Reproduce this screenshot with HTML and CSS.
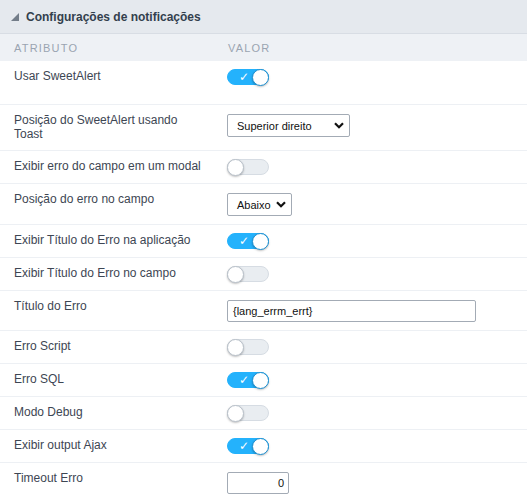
FILE: index.html
```html
<!DOCTYPE html>
<html lang="pt">
<head>
<meta charset="utf-8">
<title>Configurações de notificações</title>
<link rel="stylesheet" href="styles.css">
</head>
<body>
<div class="panel">
  <div class="panel-head">
    <span class="corner"></span>
    <span class="panel-title">Configurações de notificações</span>
  </div>
  <div class="cols">
    <div class="col-label">ATRIBUTO</div>
    <div class="col-value">VALOR</div>
  </div>

  <div class="row first">
    <div class="label">Usar SweetAlert</div>
    <div class="value"><span class="toggle on"><span class="check">✓</span><span class="knob"></span></span></div>
  </div>
  <div class="row">
    <div class="label">Posição do SweetAlert usando Toast</div>
    <div class="value"><span class="select wide">Superior direito<svg class="chev" viewBox="0 0 10 7"><path d="M1 1.2 L5 5.2 L9 1.2" /></svg></span></div>
  </div>
  <div class="row">
    <div class="label">Exibir erro do campo em um modal</div>
    <div class="value"><span class="toggle"><span class="knob"></span></span></div>
  </div>
  <div class="row">
    <div class="label">Posição do erro no campo</div>
    <div class="value"><span class="select narrow">Abaixo<svg class="chev" viewBox="0 0 10 7"><path d="M1 1.2 L5 5.2 L9 1.2" /></svg></span></div>
  </div>
  <div class="row">
    <div class="label">Exibir Título do Erro na aplicação</div>
    <div class="value"><span class="toggle on"><span class="check">✓</span><span class="knob"></span></span></div>
  </div>
  <div class="row">
    <div class="label">Exibir Título do Erro no campo</div>
    <div class="value"><span class="toggle"><span class="knob"></span></span></div>
  </div>
  <div class="row">
    <div class="label">Título do Erro</div>
    <div class="value"><span class="input text">{lang_errm_errt}</span></div>
  </div>
  <div class="row">
    <div class="label">Erro Script</div>
    <div class="value"><span class="toggle"><span class="knob"></span></span></div>
  </div>
  <div class="row">
    <div class="label">Erro SQL</div>
    <div class="value"><span class="toggle on"><span class="check">✓</span><span class="knob"></span></span></div>
  </div>
  <div class="row">
    <div class="label">Modo Debug</div>
    <div class="value"><span class="toggle"><span class="knob"></span></span></div>
  </div>
  <div class="row">
    <div class="label">Exibir output Ajax</div>
    <div class="value"><span class="toggle on"><span class="check">✓</span><span class="knob"></span></span></div>
  </div>
  <div class="row last">
    <div class="label">Timeout Erro</div>
    <div class="value"><span class="input num">0</span></div>
  </div>
</div>
</body>
</html>
```

FILE: styles.css
```css
* { box-sizing: border-box; }
html, body { margin: 0; padding: 0; background: #ffffff; }
body {
  font-family: "Liberation Sans", Arial, sans-serif;
  font-size: 12px;
  color: #3d4653;
  width: 527px;
}
.panel { width: 527px; }
.panel-head {
  height: 34px;
  background: #e5e9ee;
  border-bottom: 1px solid #d8dde4;
  display: flex;
  align-items: center;
  padding-left: 11px;
}
.corner {
  width: 0; height: 0;
  border-style: solid;
  border-width: 0 0 8px 8px;
  border-color: transparent transparent #737d89 transparent;
  margin-right: 7px;
  margin-top: 1px;
}
.panel-title {
  font-weight: bold;
  font-size: 12px;
  color: #333f4d;
}
.cols {
  height: 27px;
  background: #eef1f5;
  display: grid;
  grid-template-columns: 213px 1fr;
  align-items: center;
  font-size: 11px;
  letter-spacing: 1.2px;
  color: #9aa4b1;
  padding-top: 1px;
}
.col-label { padding-left: 14px; }
.col-value { padding-left: 15px; }
.row {
  display: grid;
  grid-template-columns: 213px 1fr;
  border-bottom: 1px solid #edf0f4;
}
.row.first { min-height: 44px; }
.row.last { border-bottom: none; }
.label {
  padding: 8px 8px 9px 14px;
  line-height: 14px;
}
.value {
  padding: 8px 0 8px 14px;
}
.toggle {
  display: block;
  position: relative;
  width: 42px;
  height: 16px;
  border-radius: 8px;
  background: #e9edf1;
  border: 1px solid #d6dce3;
}
.toggle.on {
  background: #24b2fc;
  border-color: #24b2fc;
}
.knob {
  position: absolute;
  left: -1px;
  top: -1px;
  width: 17px;
  height: 17px;
  border-radius: 50%;
  background: #ffffff;
  border: 1px solid #b9c1ca;
  box-shadow: 0 1px 2px rgba(0,0,0,0.25);
}
.toggle.on .knob {
  left: auto;
  right: -1px;
  border-color: #1d8fd0;
}
.check {
  position: absolute;
  left: 11px;
  top: 0;
  color: #ffffff;
  font-family: "DejaVu Sans", sans-serif;
  font-size: 12px;
  line-height: 15px;
  font-weight: bold;
}
.select {
  display: flex;
  align-items: center;
  justify-content: space-between;
  height: 23px;
  margin-top: 1px;
  border: 1px solid #a3abb5;
  border-radius: 2px;
  font-size: 11px;
  color: #111111;
  padding: 0 5px 0 9px;
}
.select.wide { width: 123px; }
.select.narrow { width: 65px; }
.chev { width: 10px; height: 7px; }
.chev path { fill: none; stroke: #111111; stroke-width: 2.2; }
.input {
  display: flex;
  align-items: center;
  height: 22px;
  margin-top: 1px;
  border: 1px solid #a3abb5;
  border-radius: 2px;
  font-size: 11px;
  color: #111111;
}
.input.text { width: 249px; padding-left: 5px; }
.input.num { width: 62px; justify-content: flex-end; padding-right: 4px; }
```
